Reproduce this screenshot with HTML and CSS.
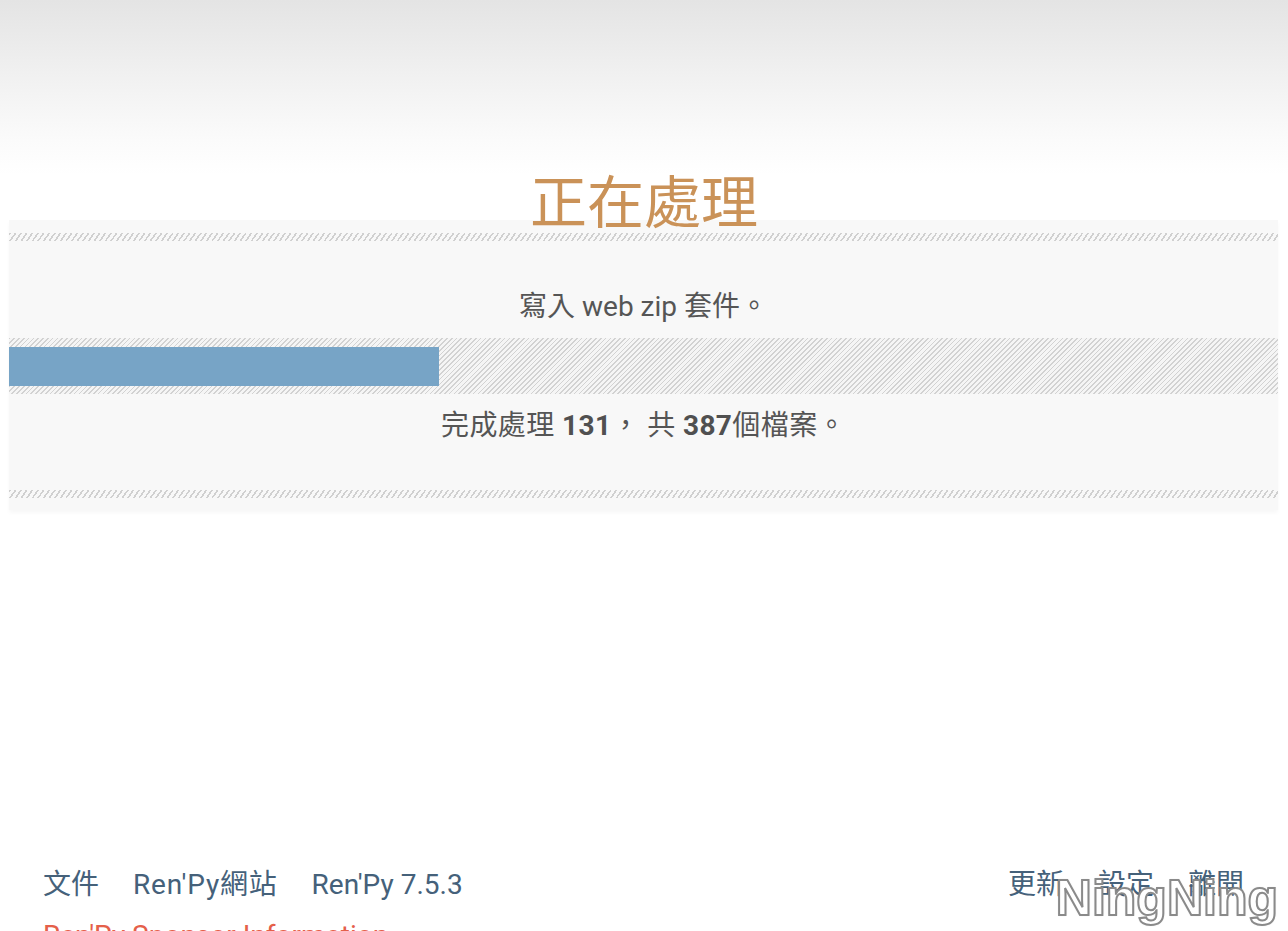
FILE: index.html
```html
<!DOCTYPE html>
<html lang="zh-Hant">
<head>
<meta charset="utf-8">
<title>正在處理</title>
<link rel="stylesheet" href="styles.css">
</head>
<body>
<div class="screen">
  <h1 class="title">正在處理</h1>
  <section class="panel">
    <div class="hatch"></div>
    <p class="msg msg-first">寫入 web zip 套件。</p>
    <div class="bar"><div class="fill" style="width:430px"></div></div>
    <p class="msg msg-second">完成處理 <b>131</b>， 共 <b>387</b>個檔案。</p>
    <div class="hatch hatch-bottom"></div>
  </section>
  <div class="spacer"></div>
  <footer class="footer">
    <div class="nav-row">
      <nav class="nav">
        <a class="link">文件</a>
        <a class="link link-site">Ren'Py網站</a>
        <a class="link">Ren'Py 7.5.3</a>
      </nav>
      <nav class="nav">
        <a class="link">更新</a>
        <a class="link">設定</a>
        <a class="link">離開</a>
      </nav>
    </div>
    <a class="sponsor">Ren'Py Sponsor Information</a>
  </footer>
  <div class="watermark">NingNing</div>
</div>
</body>
</html>
```

FILE: styles.css
```css
* { box-sizing: border-box; }
html, body {
  margin: 0;
  padding: 0;
  height: 931px;
  overflow: hidden;
  background: #fff;
}
body {
  font-family: Roboto, "Noto Sans CJK TC", sans-serif;
}
.screen {
  position: relative;
  height: 931px;
  display: flex;
  flex-direction: column;
  background: linear-gradient(to bottom, #e4e4e4 0px, #f3f3f3 90px, #fbfbfb 140px, #ffffff 175px, #ffffff 100%);
}
.title {
  position: relative;
  z-index: 1;
  margin: 169px 0 -7px 0;
  height: 58px;
  line-height: 58px;
  font-size: 57px;
  font-weight: 400;
  text-align: center;
  color: #ca9258;
  font-family: "Noto Sans CJK TC", sans-serif;
}
.panel {
  margin: 0 10px 0 9px;
  padding: 13px 0 12px 0;
  background: #f8f8f8;
  box-shadow: 0 3px 4px rgba(0, 0, 0, 0.03);
}
.hatch {
  height: 8px;
  background: repeating-linear-gradient(125deg, #d0d0d0 0px, #d0d0d0 1.6px, transparent 1.6px, transparent 4.6px);
}
.hatch-bottom { margin-top: 46px; }
.msg {
  margin: 0;
  height: 36px;
  line-height: 36px;
  font-size: 28px;
  color: #555;
  text-align: center;
}
.msg b { font-weight: 700; color: #505050; }
.msg-first { margin-top: 48px; }
.msg-second { margin-top: 14px; letter-spacing: 0.4px; }
.bar {
  margin-top: 13px;
  height: 56px;
  padding: 9px 0 8px 0;
  background: repeating-linear-gradient(135deg, #d2d2d2 0px, #d2d2d2 1.2px, #f5f5f5 1.2px, #f5f5f5 3.4px);
}
.fill {
  height: 39px;
  background: #77a4c6;
}
.spacer { flex: 1; }
.footer {
  padding: 0 44px 0 43px;
  height: 71px;
}
.nav-row {
  display: flex;
  justify-content: space-between;
  height: 50px;
  align-items: center;
}
.nav {
  display: flex;
  gap: 34px;
}
.link {
  font-size: 28px;
  color: #45617a;
  line-height: 36px;
}
.link-site { letter-spacing: 0.8px; }
.sponsor {
  display: block;
  margin-top: 8px;
  font-size: 28px;
  line-height: 36px;
  color: #e5604a;
}
.watermark {
  position: absolute;
  right: 10px;
  bottom: 4px;
  font-family: "Liberation Sans", Arial, sans-serif;
  font-weight: 700;
  font-size: 50px;
  color: #ffffff;
  -webkit-text-stroke: 2px #8a8a8a;
  text-shadow: 0 0 2px rgba(0, 0, 0, 0.35);
}
```
